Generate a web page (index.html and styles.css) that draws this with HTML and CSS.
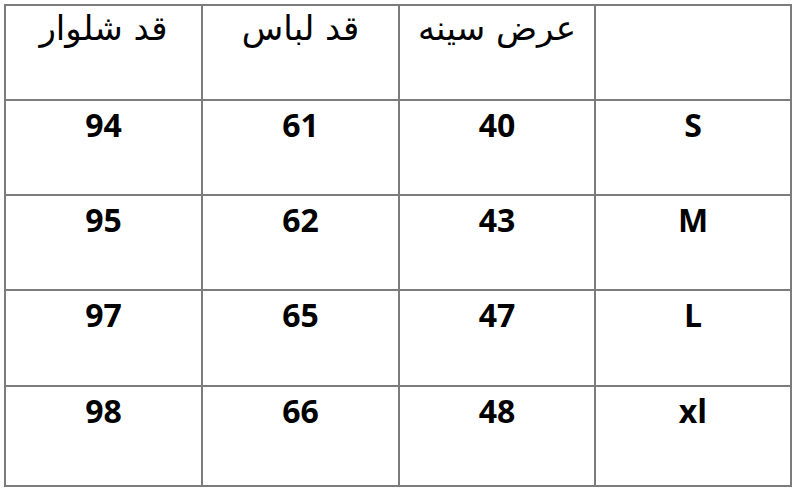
FILE: index.html
```html
<!DOCTYPE html>
<html lang="fa">
<head>
<meta charset="utf-8">
<title>جدول سایز</title>
<link rel="stylesheet" href="styles.css">
</head>
<body>
<div class="size-table">
  <div class="cell head"><span dir="rtl">قد شلوار</span></div>
  <div class="cell head"><span dir="rtl">قد لباس</span></div>
  <div class="cell head"><span dir="rtl">عرض سینه</span></div>
  <div class="cell head"></div>

  <div class="cell num">94</div>
  <div class="cell num">61</div>
  <div class="cell num">40</div>
  <div class="cell num">S</div>

  <div class="cell num">95</div>
  <div class="cell num">62</div>
  <div class="cell num">43</div>
  <div class="cell num">M</div>

  <div class="cell num">97</div>
  <div class="cell num">65</div>
  <div class="cell num">47</div>
  <div class="cell num">L</div>

  <div class="cell num">98</div>
  <div class="cell num">66</div>
  <div class="cell num">48</div>
  <div class="cell num">xl</div>
</div>
</body>
</html>
```
FILE: styles.css
```css
html, body {
  margin: 0;
  padding: 0;
  background: #ffffff;
}

body {
  padding: 4px 0 0 4px;
}

.size-table {
  display: grid;
  grid-template-columns: 197px 197px 196px 196px;
  grid-template-rows: 95px 95px 95px 96px 100px;
  width: max-content;
  border-left: 2px solid #7c7c7c;
  border-top: 2px solid #7c7c7c;
}

.cell {
  border-right: 2px solid #7c7c7c;
  border-bottom: 2px solid #7c7c7c;
  text-align: center;
  color: #000;
  box-sizing: border-box;
}

.head {
  font-family: "DejaVu Sans", "Noto Sans", sans-serif;
  font-size: 34px;
  line-height: 1;
  padding-top: 5px;
}

.num {
  font-family: "Open Sans", "Liberation Sans", sans-serif;
  font-weight: 700;
  font-size: 32px;
  line-height: 1;
  padding-top: 8px;
}
```
